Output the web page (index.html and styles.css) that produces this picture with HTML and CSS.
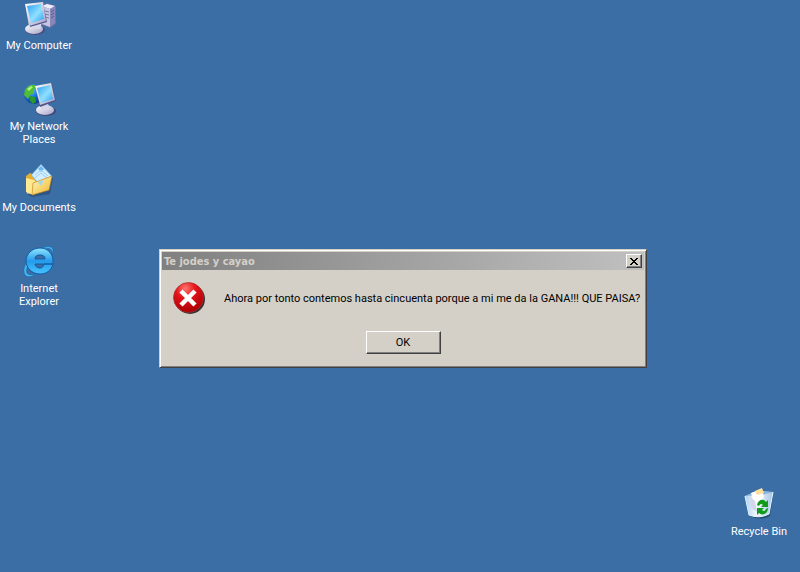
FILE: index.html
```html
<!DOCTYPE html>
<html lang="es">
<head>
    <meta charset="UTF-8">
    <meta name="viewport" content="width=device-width, initial-scale=1.0">
    <title>Te jodes y cayao</title>
    <link rel="stylesheet" href="styles.css">
</head>
<body>
    <main class="desktop">
        <!-- Desktop icons -->
        <div class="icons">
            <a class="shortcut" href="#">
                <svg width="34" height="34" viewBox="0 0 34 34" aria-hidden="true">
                    <defs>
                        <linearGradient id="screen" x1="0" y1="0" x2="1" y2="1">
                            <stop offset="0" stop-color="#2fa0f4"/>
                            <stop offset=".55" stop-color="#8fe0ff"/>
                            <stop offset="1" stop-color="#2b9bf0"/>
                        </linearGradient>
                        <linearGradient id="plastic" x1="0" y1="0" x2="1" y2="1">
                            <stop offset="0" stop-color="#ffffff"/>
                            <stop offset="1" stop-color="#a6a3c6"/>
                        </linearGradient>
                    </defs>
                    <path d="M19 4 25 1 34 4 34 22 28 26 19 23Z" fill="#6f70a5"/>
                    <path d="M20 4 25 2 33 4 28 7Z" fill="#eeeefa"/>
                    <path d="M20 4 28 7 28 25 20 22Z" fill="#c5c5e2"/>
                    <path d="M28 7 33 4 33 21 28 25Z" fill="#8787b9"/>
                    <path d="M23 9l4 1M23 12l4 1M23 15l4 1" stroke="#7778a8"/>
                    <path d="M29 10l3-2M29 13l3-2M29 16l3-2" stroke="#5b5b8d"/>
                    <ellipse cx="13" cy="28" rx="10" ry="5" fill="#494e80"/>
                    <ellipse cx="12" cy="27" rx="9" ry="5" fill="url(#plastic)"/>
                    <path d="M11 20h9l-2 7h-5Z" fill="#d8d8ed"/>
                    <path d="M4 2 21 1 25 20 8 25Z" fill="#52598c"/>
                    <path d="M3 2 21 0 24 19 7 24Z" fill="url(#plastic)"/>
                    <path d="M5 4 19 2 22 17 9 21Z" fill="url(#screen)"/>
                </svg>
                <span>My Computer</span>
            </a>
            <a class="shortcut" href="#">
                <svg width="34" height="34" viewBox="0 0 34 34" aria-hidden="true">
                    <defs>
                        <radialGradient id="ocean" cx=".35" cy=".3" r=".75">
                            <stop offset="0" stop-color="#6dc9ff"/>
                            <stop offset=".5" stop-color="#176fe0"/>
                            <stop offset="1" stop-color="#093385"/>
                        </radialGradient>
                    </defs>
                    <circle cx="12" cy="11" r="10" fill="url(#ocean)"/>
                    <path d="M3 7Q7 1 13 2L15 5 11 7 12 10 8 12 6 16 2 12Z" fill="#4fbd35"/>
                    <path d="M16 3 20 5 22 10 17 9ZM8 13 13 14 14 19 11 21 8 18Z" fill="#2c9830"/>
                    <path d="M5 6 9 3 11 4 7 8Z" fill="#b1f477"/>
                    <ellipse cx="24" cy="28" rx="10" ry="5" fill="#424879"/>
                    <ellipse cx="23" cy="27" rx="9" ry="5" fill="url(#plastic)"/>
                    <path d="M19 20h7l1 7h-8Z" fill="#d6d5e9"/>
                    <path d="M13 3 30 1 34 18 18 24Z" fill="#505486"/>
                    <path d="M13 3 29 0 33 17 18 22Z" fill="url(#plastic)"/>
                    <path d="M15 5 28 2 31 16 19 20Z" fill="url(#screen)"/>
                </svg>
                <span>My Network Places</span>
            </a>
            <a class="shortcut" href="#">
                <svg width="34" height="34" viewBox="0 0 34 34" aria-hidden="true">
                    <defs>
                        <linearGradient id="folder" x1="0" y1="0" x2="1" y2="1">
                            <stop offset="0" stop-color="#fffac0"/>
                            <stop offset="1" stop-color="#f0b52d"/>
                        </linearGradient>
                    </defs>
                    <path d="M5 14 9 11 13 13 26 11 31 14 28 30 10 33 5 30Z" fill="#263c60" opacity=".5"/>
                    <path d="M4 12 8 9 12 11 25 9 28 12 27 26 5 30Z" fill="#e7ad31"/>
                    <path d="M9 11 19 0 30 12 20 24Z" fill="#7dbce9"/>
                    <path d="M10 11 19 1 29 12 19 22Z" fill="#d3efff"/>
                    <path d="M16 5 19 2 22 5 19 8Z" fill="#69b8ec"/>
                    <path d="M13 11l6-5 7 6M13 14l6-5 7 6" fill="none" stroke="#9bcdf2"/>
                    <path d="M4 14 12 16 15 19 11 31 4 28Z" fill="#ffe990"/>
                    <path d="M11 19 30 12 27 26 10 31Z" fill="url(#folder)" stroke="#c28a20" stroke-width=".7"/>
                    <path d="M16 18 22 16 19 22Z" fill="#9dd8ee"/>
                </svg>
                <span>My Documents</span>
            </a>
            <a class="shortcut" href="#">
                <svg width="34" height="34" viewBox="0 0 34 34" aria-hidden="true">
                    <defs>
                        <linearGradient id="explorer" x1="0" y1="0" x2="0" y2="1">
                            <stop offset="0" stop-color="#8fe6ff"/>
                            <stop offset=".5" stop-color="#249bea"/>
                            <stop offset="1" stop-color="#45c3ff"/>
                        </linearGradient>
                    </defs>
                    <path d="M30 10C34 1 27-1 16 5 6 11-1 24 3 30c2 3 7 2 11-1-5 1-8 1-9-1C3 23 9 13 18 7c7-5 13-5 12 3Z" fill="#45b5f0" stroke="#1763a8" stroke-width=".6"/>
                    <path d="M18 3C10 3 4 9 4 16s6 13 14 13c6 0 11-3 13-10h-9c-1 3-2 4-4 4-3 0-5-2-5-4h18C32 9 26 3 18 3ZM13 14c0-3 2-4 5-4s5 1 5 4Z" fill="url(#explorer)" fill-rule="evenodd" stroke="#155ba5"/>
                </svg>
                <span>Internet Explorer</span>
            </a>
        </div>

        <a class="shortcut recycle" href="#">
            <svg width="34" height="34" viewBox="0 0 34 34" aria-hidden="true">
                <defs>
                    <linearGradient id="bin" x1="0" y1="0" x2="1" y2="0">
                        <stop offset="0" stop-color="#a9cff1"/>
                        <stop offset=".4" stop-color="#f3faff"/>
                        <stop offset="1" stop-color="#a5c6e5"/>
                    </linearGradient>
                </defs>
                <path d="M4 8 31 6 28 28Q19 33 8 28Z" fill="#1b3559" opacity=".6"/>
                <path d="M3 8 15 3 31 4 27 26Q17 31 7 27Z" fill="url(#bin)"/>
                <path d="M3 8 15 3 31 4 20 7Z" fill="#8ab4dc"/>
                <path d="M9 5 19 1 22 8 18 19 12 15Z" fill="#fff"/>
                <path d="M13 3 20 0 22 5 15 7Z" fill="#ffe09a"/>
                <path d="M8 9 13 13 15 24 9 20Z" fill="#d4d6ec"/>
                <path d="M3 8 7 27Q17 31 27 26L31 4" fill="none" stroke="#e6f5ff"/>
                <path d="M15 17c1-5 6-7 9-3l2-2v7h-7l2-2c-2-2-3-1-4 1ZM26 20c0 6-6 8-9 5l-2 2v-7h7l-2 2c2 2 3 1 4-1Z" fill="#129a1d"/>
            </svg>
            <span>Recycle Bin</span>
        </a>

        <!-- Error dialog -->
        <section class="dialog" role="alertdialog" aria-labelledby="dialogTitle" aria-describedby="dialogText">
            <header class="title-bar">
                <h1 id="dialogTitle">Te jodes y cayao</h1>
                <button class="close-btn" type="button" aria-label="Close">
                    <svg width="8" height="7" viewBox="0 0 8 7" shape-rendering="crispEdges" aria-hidden="true">
                        <path d="M0 0h2v1h1v1h2V1h1V0h2v1H7v1H6v1H5v1h1v1h1v1h1v1H6V6H5V5H3v1H2v1H0V6h1V5h1V4h1V3H2V2H1V1H0Z"/>
                    </svg>
                </button>
            </header>
            <div class="dialog-body">
                <svg class="error-icon" width="33" height="33" viewBox="0 0 33 33" aria-hidden="true">
                    <defs>
                        <radialGradient id="error" cx=".4" cy=".2" r=".8">
                            <stop offset="0" stop-color="#ff7770"/>
                            <stop offset=".4" stop-color="#e5141b"/>
                            <stop offset="1" stop-color="#a90006"/>
                        </radialGradient>
                    </defs>
                    <circle cx="17" cy="17" r="15" fill="#343030"/>
                    <circle cx="15.5" cy="15.5" r="15" fill="url(#error)" stroke="#ae3434" stroke-width=".7"/>
                    <path d="m8 9 14 14M22 9 8 23" stroke="#fff" stroke-width="4.5"/>
                </svg>
                <p id="dialogText">Ahora por tonto contemos hasta cincuenta porque a mi me da la GANA!!! QUE PAISA?</p>
            </div>
            <div class="dialog-actions">
                <button class="ok-btn" type="button">OK</button>
            </div>
        </section>
    </main>
</body>
</html>
```
FILE: styles.css
```css
* {
    margin: 0;
    padding: 0;
    box-sizing: border-box;
}

body {
    font-family: Tahoma, Roboto, 'DejaVu Sans', sans-serif;
    font-size: 11px;
    line-height: 13px;
    color: #000;
    background: #3a6ea5;
}

.desktop {
    position: relative;
    min-height: 100vh;
    overflow: hidden;
}

.icons {
    display: grid;
    grid-template-columns: 78px;
    grid-auto-rows: 81px;
    padding-top: 2px;
}

.shortcut {
    display: flex;
    flex-direction: column;
    align-items: center;
    gap: 3px;
    width: 78px;
    color: #fff;
    text-align: center;
    text-decoration: none;
}

.shortcut span {
    max-width: 74px;
}

.recycle {
    position: absolute;
    right: 2px;
    bottom: 34px;
}

.dialog {
    position: absolute;
    top: 249px;
    left: 159px;
    min-width: 488px;
    padding: 1px;
    background: #d4d0c8;
    border: 1px solid;
    border-color: #d4d0c8 #404040 #404040 #d4d0c8;
    box-shadow: inset 1px 1px #fff, inset -1px -1px #808080;
}

.title-bar {
    display: flex;
    align-items: center;
    justify-content: space-between;
    height: 18px;
    margin: 1px 1px 0;
    padding: 0 2px;
    background: linear-gradient(to right, #808080, #c0c0c0);
}

.title-bar h1 {
    font-family: Tahoma, 'DejaVu Sans Condensed', 'DejaVu Sans', sans-serif;
    font-size: 11px;
    font-weight: bold;
    color: #d4d0c8;
}

button {
    display: flex;
    align-items: center;
    justify-content: center;
    font: inherit;
    color: #000;
    background: #d4d0c8;
    border: 1px solid;
    border-color: #fff #404040 #404040 #fff;
    box-shadow: inset -1px -1px #808080;
}

.close-btn {
    width: 16px;
    height: 14px;
}

.dialog-body {
    display: flex;
    align-items: center;
    gap: 18px;
    padding: 12px 4px 0 12px;
    white-space: nowrap;
}

.error-icon {
    flex: none;
}

.dialog-actions {
    display: flex;
    justify-content: center;
    padding: 16px 0 12px;
}

.ok-btn {
    width: 75px;
    height: 23px;
}
```
